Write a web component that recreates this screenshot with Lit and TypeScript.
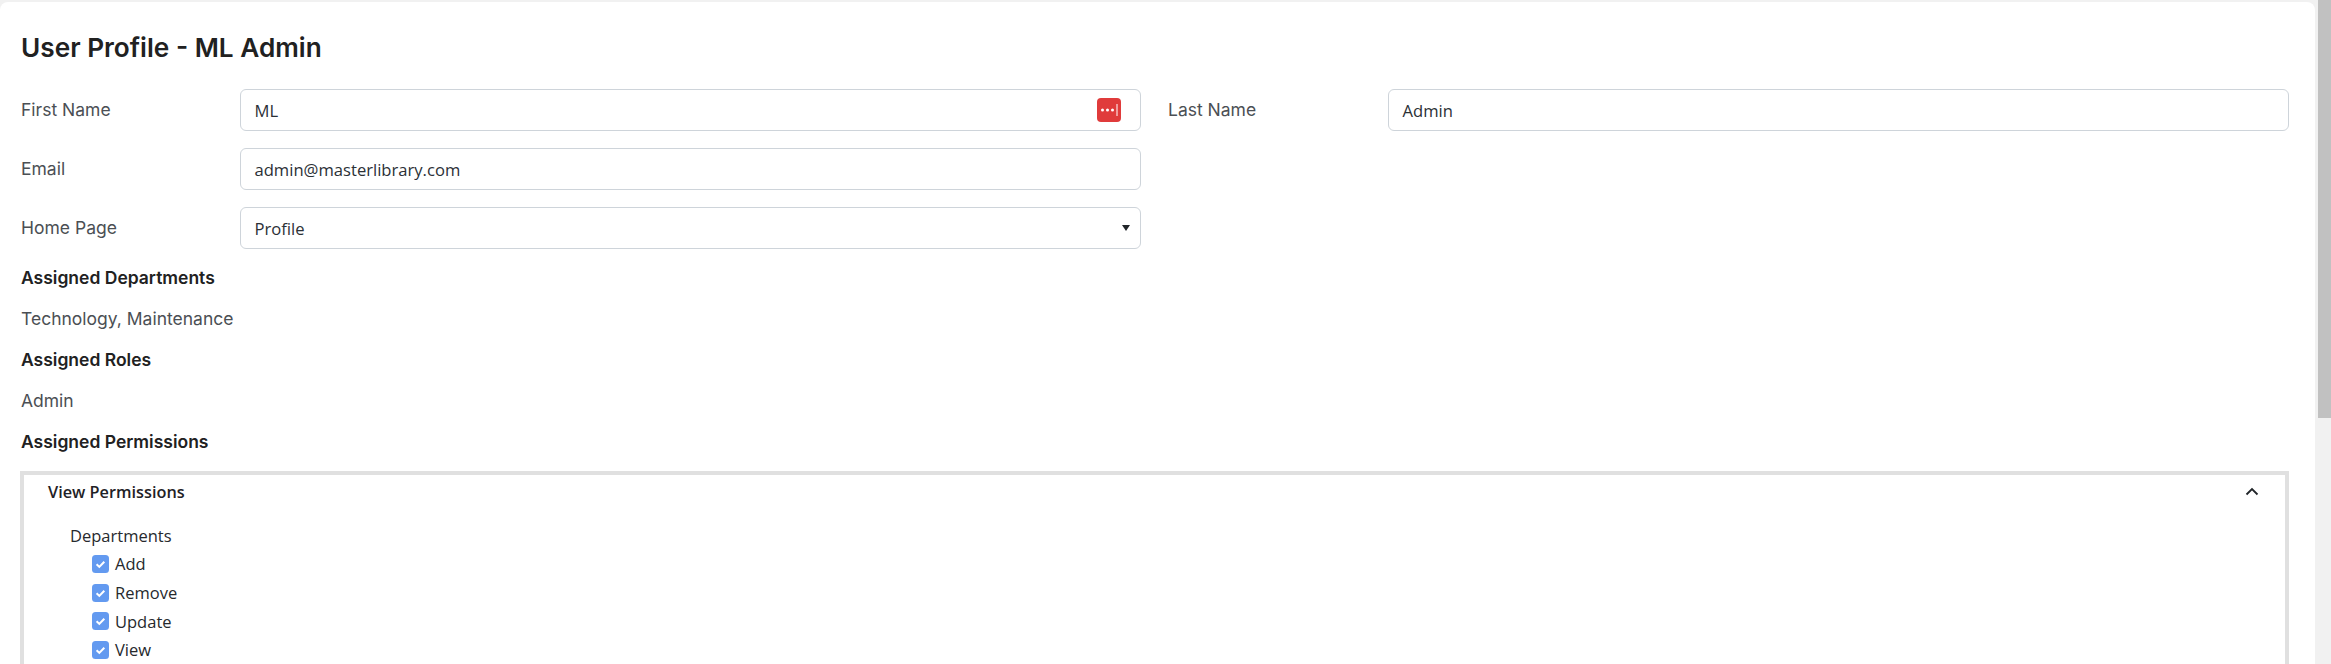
import { LitElement, html, css } from "lit";
import { customElement } from "lit/decorators.js";

@customElement("app-root")
export class AppRoot extends LitElement {
  static styles = css`
    :host {
      display: flex;
      width: 2331px;
      height: 664px;
      overflow: hidden;
      background: #f1f1f1;
      font-family: Inter, "Liberation Sans", sans-serif;
      color: #212529;
    }
    .page {
      flex: 1;
      min-width: 0;
      padding: 2px 3px 0 0;
      overflow: hidden;
    }
    .card {
      background: #fff;
      border-radius: 8px 8px 0 0;
      height: 100%;
      box-sizing: border-box;
      padding: 30px 26px 0 21px;
    }
    h1 {
      margin: 0 0 25px;
      font-size: 26.2px;
      line-height: 32px;
      font-weight: 600;
      color: #212121;
    }
    .form {
      display: grid;
      grid-template-columns: 219px 901px 27px 220px 901px;
      row-gap: 17px;
      align-items: center;
    }
    .lbl {
      font-size: 17.5px;
      color: #4b4f54;
      line-height: 24px;
    }
    .input {
      height: 42px;
      box-sizing: border-box;
      border: 1px solid #ced4da;
      border-radius: 6px;
      padding: 0 13.5px;
      font-family: "Open Sans", "Noto Sans", sans-serif;
      font-size: 16.6px;
      color: #2b3036;
      display: flex;
      align-items: center;
      justify-content: space-between;
    }
    .pw {
      width: 24px;
      height: 24px;
      display: block;
      margin-right: 5.5px;
    }
    .caret {
      width: 0;
      height: 0;
      margin-right: -3px;
      border-left: 4.7px solid transparent;
      border-right: 4.7px solid transparent;
      border-top: 6.7px solid #212529;
    }
    .blank {
      grid-column: 3 / 6;
    }
    .gap {
      grid-column: 3;
    }
    .heading {
      font-size: 17.5px;
      font-weight: 600;
      line-height: 24px;
      color: #212121;
      margin-top: 17px;
    }
    .heading ~ .heading {
      margin-top: 17.5px;
    }
    .value {
      font-size: 17.5px;
      line-height: 24px;
      color: #4b4f54;
      margin-top: 16.5px;
    }
    .box {
      margin: 16.5px 0 0 -1px;
      width: 2269px;
      box-sizing: border-box;
      border: 4px solid #e0e0e0;
      border-bottom: 0;
      height: 300px;
      font-family: "Open Sans", "Noto Sans", sans-serif;
    }
    .box-head {
      display: flex;
      align-items: center;
      justify-content: space-between;
      padding: 4px 26px 0 24px;
      height: 26px;
      font-size: 16.3px;
      font-weight: 600;
      color: #1f2226;
    }
    .chev {
      width: 14px;
      height: 9px;
      display: block;
    }
    .perm {
      padding: 17px 0 0 46px;
      font-size: 16.5px;
      color: #26292d;
    }
    .perm-title {
      line-height: 28px;
    }
    .row {
      display: flex;
      align-items: center;
      gap: 6px;
      height: 28.7px;
      margin-left: 22px;
    }
    .cb {
      width: 17px;
      height: 18px;
      display: block;
    }
    .bar {
      width: 13px;
      flex: none;
      background: #f1f1f1;
    }
    .thumb {
      height: 418px;
      background: #c1c1c1;
    }
  `;

  render() {
    const check = html`<svg class="cb" viewBox="0 0 17 18" aria-hidden="true">
      <rect width="17" height="18" rx="3.5" fill="#639af0"></rect>
      <path d="M4.6 9.3l2.7 2.6 5-5.2" fill="none" stroke="#fff" stroke-width="2"></path>
    </svg>`;
    return html`
      <div class="page">
        <div class="card">
          <h1>User Profile - ML Admin</h1>
          <div class="form">
            <div class="lbl">First Name</div>
            <div class="input">
              <span>ML</span>
              <svg class="pw" viewBox="0 0 24 24" aria-hidden="true">
                <rect width="24" height="24" rx="4" fill="#e03b3b"></rect>
                <circle cx="5.5" cy="12" r="1.5" fill="#fff"></circle>
                <circle cx="10.5" cy="12" r="1.5" fill="#fff"></circle>
                <circle cx="15.5" cy="12" r="1.5" fill="#fff"></circle>
                <rect x="19.5" y="6" width="1" height="12" fill="#fff"></rect>
              </svg>
            </div>
            <div class="gap"></div>
            <div class="lbl">Last Name</div>
            <div class="input"><span>Admin</span></div>
            <div class="lbl">Email</div>
            <div class="input"><span>admin@masterlibrary.com</span></div>
            <div class="blank"></div>
            <div class="lbl">Home Page</div>
            <div class="input"><span>Profile</span><span class="caret"></span></div>
            <div class="blank"></div>
          </div>
          <div class="heading">Assigned Departments</div>
          <div class="value">Technology, Maintenance</div>
          <div class="heading">Assigned Roles</div>
          <div class="value">Admin</div>
          <div class="heading">Assigned Permissions</div>
          <div class="box">
            <div class="box-head">
              <span>View Permissions</span>
              <svg class="chev" viewBox="0 0 14 9" aria-hidden="true">
                <path d="M1.5 7.5L7 2l5.5 5.5" fill="none" stroke="#212529" stroke-width="1.8"></path>
              </svg>
            </div>
            <div class="perm">
              <div class="perm-title">Departments</div>
              ${["Add", "Remove", "Update", "View"].map(
                (t) => html`<div class="row">${check}<span>${t}</span></div>`
              )}
            </div>
          </div>
        </div>
      </div>
      <div class="bar"><div class="thumb"></div></div>
    `;
  }
}
